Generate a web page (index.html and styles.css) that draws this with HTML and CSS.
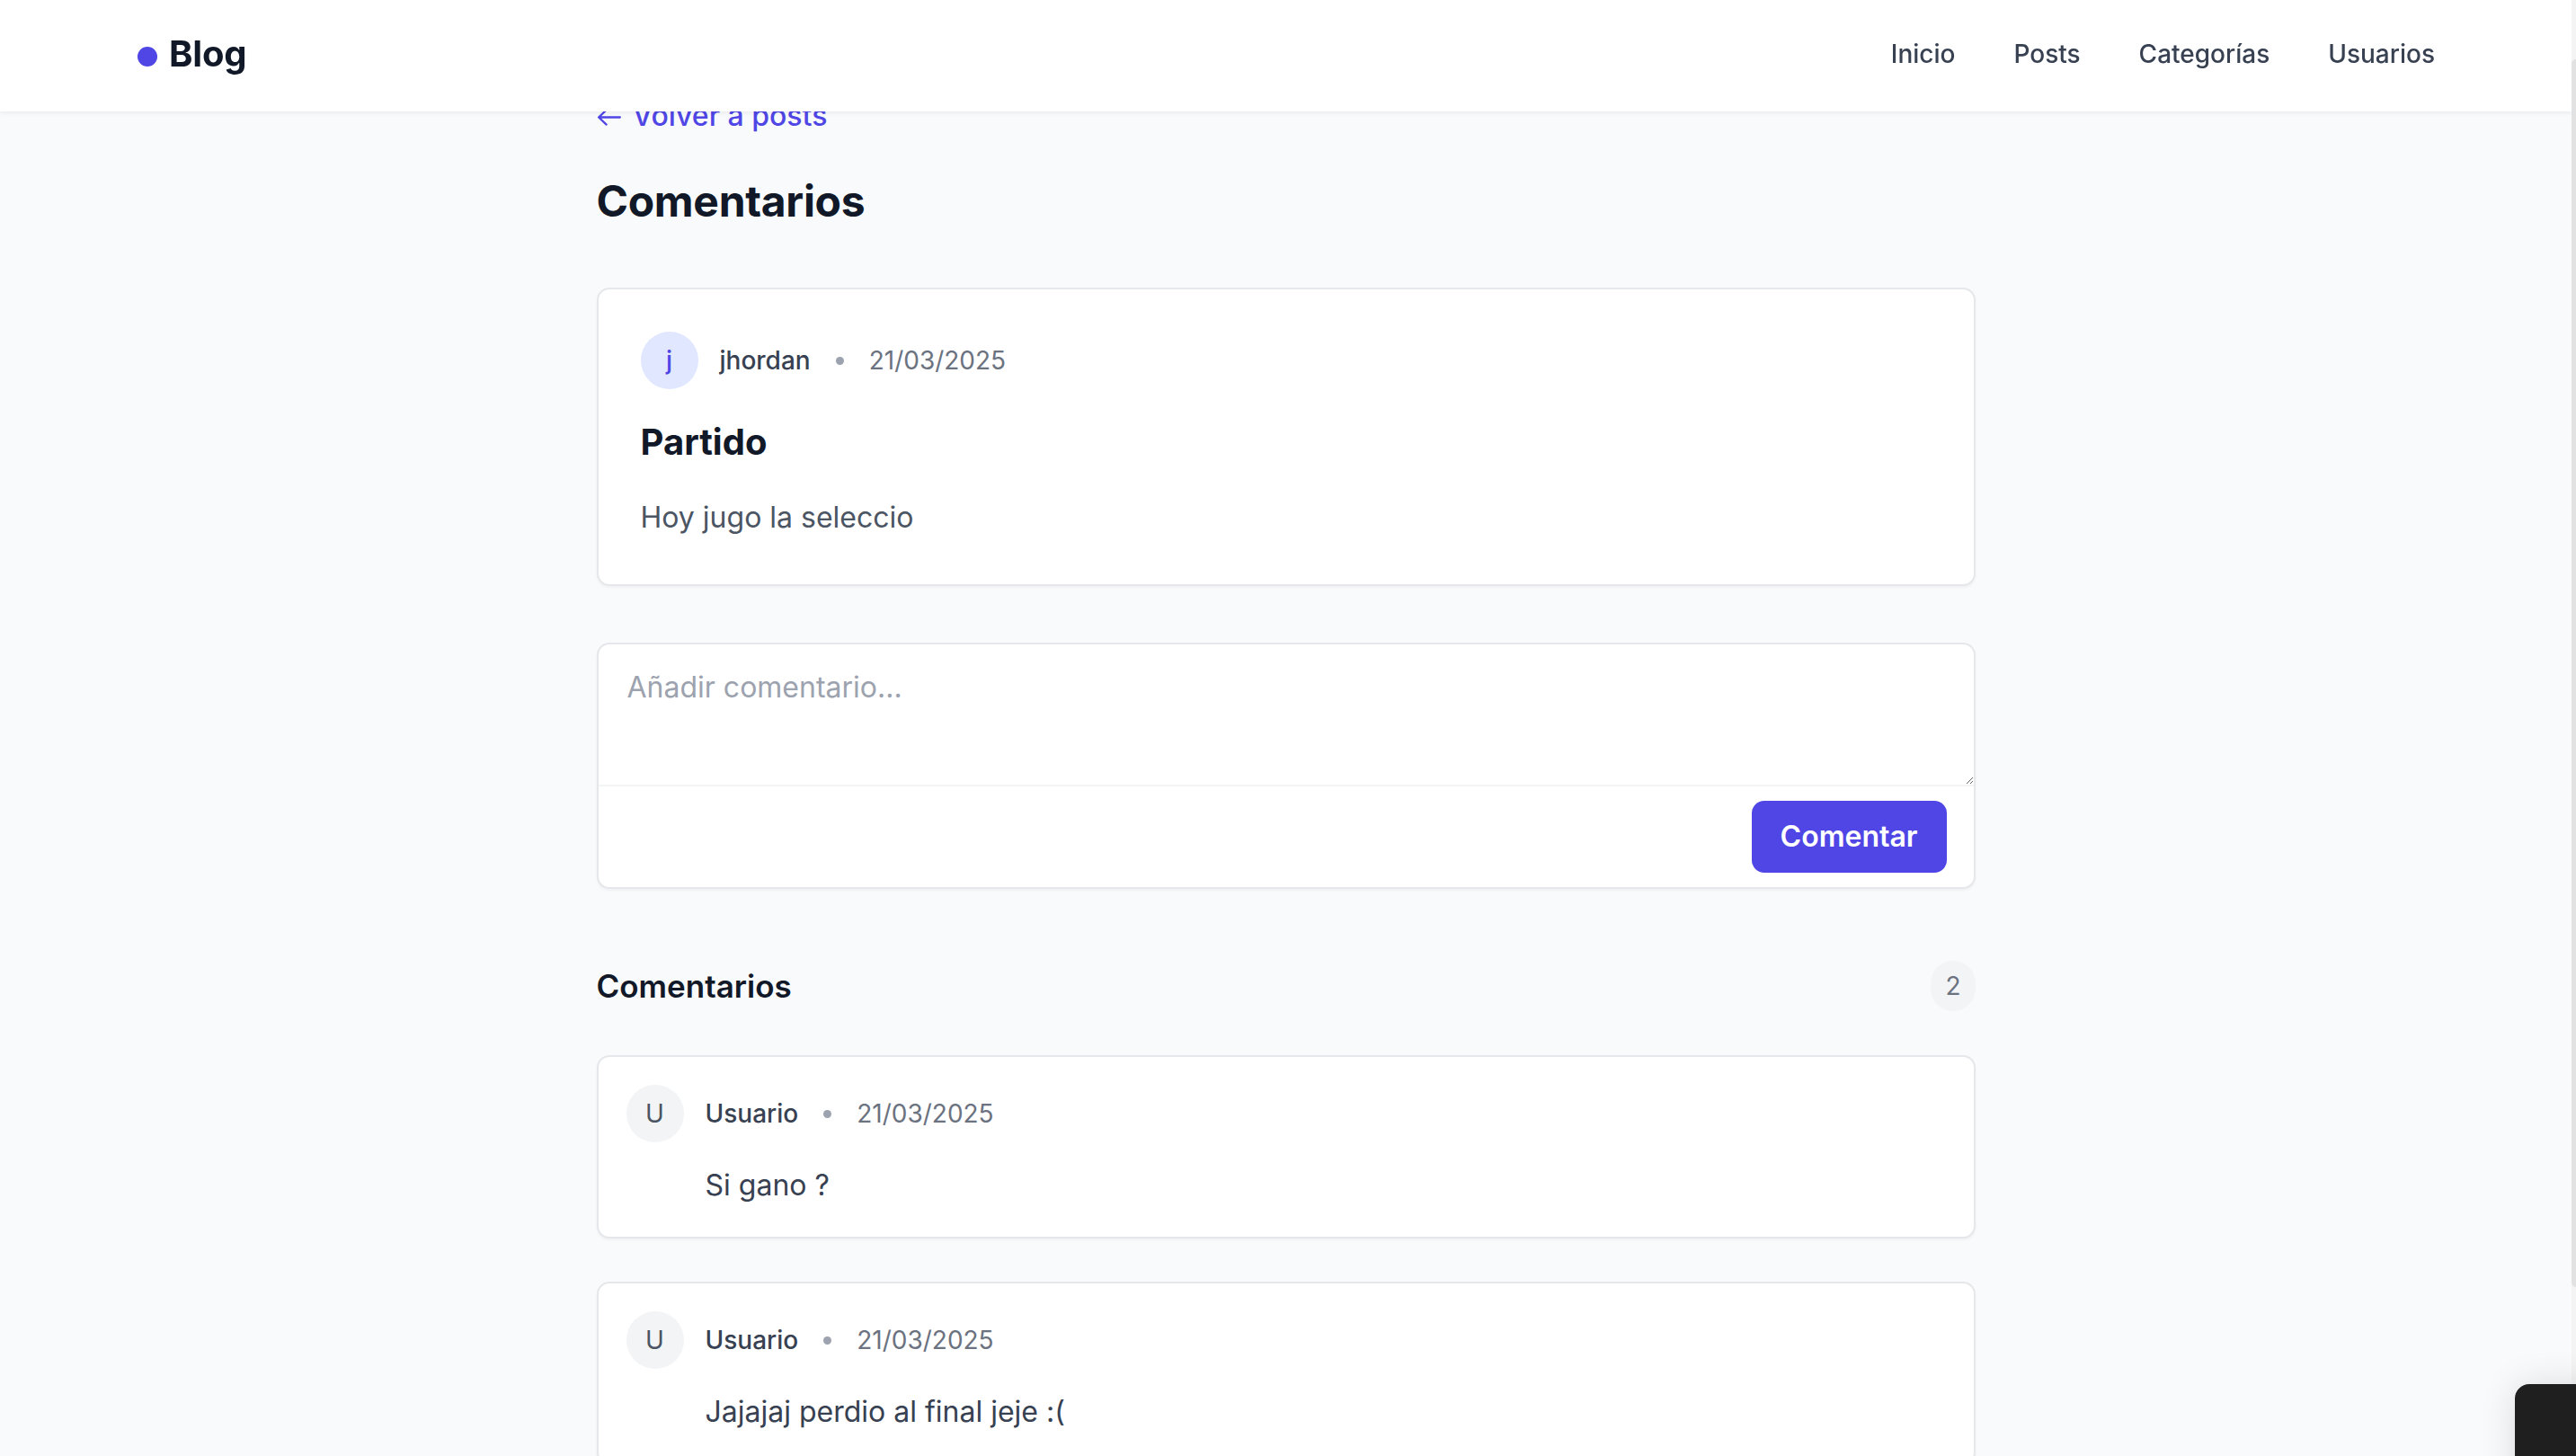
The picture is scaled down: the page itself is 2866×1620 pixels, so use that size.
FILE: index.html
```html
<!DOCTYPE html>
<html lang="es">
<head>
<meta charset="utf-8">
<title>Comentarios</title>
<link rel="stylesheet" href="styles.css">
</head>
<body>
<header class="navbar">
  <a class="brand" href="#"><span class="brand-dot"></span><span class="brand-name">Blog</span></a>
  <nav class="nav-links">
    <a href="#">Inicio</a>
    <a href="#">Posts</a>
    <a href="#">Categorías</a>
    <a href="#">Usuarios</a>
  </nav>
</header>

<main class="page">
  <a class="back-link" href="#">
    <svg class="back-icon" viewBox="0 0 28 20" width="27" height="19" aria-hidden="true"><path d="M27 10H2M11 1.5L2 10l9 8.5" fill="none" stroke="currentColor" stroke-width="2.4" stroke-linecap="round" stroke-linejoin="round"/></svg>
    <span>Volver a posts</span>
  </a>

  <h1 class="page-title">Comentarios</h1>

  <article class="card post-card">
    <div class="meta">
      <span class="avatar avatar-indigo">j</span>
      <span class="author">jhordan</span>
      <span class="sep"></span>
      <span class="date">21/03/2025</span>
    </div>
    <h2 class="post-title">Partido</h2>
    <p class="post-body">Hoy jugo la seleccio</p>
  </article>

  <form class="card comment-form">
    <textarea class="comment-input" placeholder="Añadir comentario..."></textarea>
    <div class="form-footer">
      <button type="button" class="btn">Comentar</button>
    </div>
  </form>

  <div class="section-head">
    <h3 class="section-title">Comentarios</h3>
    <span class="count">2</span>
  </div>

  <div class="comment-list">
    <div class="card comment">
      <div class="meta">
        <span class="avatar avatar-gray">U</span>
        <span class="author">Usuario</span>
        <span class="sep"></span>
        <span class="date">21/03/2025</span>
      </div>
      <p class="comment-text">Si gano ?</p>
    </div>
    <div class="card comment">
      <div class="meta">
        <span class="avatar avatar-gray">U</span>
        <span class="author">Usuario</span>
        <span class="sep"></span>
        <span class="date">21/03/2025</span>
      </div>
      <p class="comment-text">Jajajaj perdio al final jeje :(</p>
    </div>
  </div>
</main>

<div class="scrollbar"><div class="scrollbar-thumb"></div></div>
<div class="dock"></div>
</body>
</html>
```

FILE: styles.css
```css
* { box-sizing: border-box; }

html {
  overflow: hidden;
  height: 100%;
}

body {
  margin: 0 5px 0 0;
  background: #f9fafb;
  font-family: Inter, "Noto Sans", "Liberation Sans", sans-serif;
  color: #111827;
  min-height: 100%;
}

a { text-decoration: none; }

/* Top navigation */
.navbar {
  position: fixed;
  top: 0;
  left: 0;
  right: 5px;
  height: 124px;
  background: #ffffff;
  box-shadow: 0 2px 5px rgba(0, 0, 0, 0.06);
  display: flex;
  align-items: center;
  justify-content: space-between;
  padding: 0 152px 0 153px;
  z-index: 10;
}

.brand {
  display: flex;
  align-items: center;
  gap: 13px;
  color: #111827;
  margin-top: -4px;
}

.brand-dot {
  width: 22px;
  height: 22px;
  border-radius: 50%;
  background: #4f46e5;
  margin-top: 5px;
}

.brand-name {
  font-size: 40px;
  font-weight: 700;
  line-height: 56px;
  letter-spacing: -0.2px;
}

.nav-links {
  display: flex;
  gap: 65px;
  margin-top: -4px;
}

.nav-links a {
  font-size: 28px;
  font-weight: 500;
  color: #374151;
  line-height: 40px;
}

/* Page */
.page {
  width: 1534px;
  margin: 0 auto;
  padding-top: 109px;
  padding-bottom: 80px;
}

.back-link {
  display: inline-flex;
  align-items: center;
  gap: 13px;
  color: #4f46e5;
  font-size: 32px;
  font-weight: 500;
  line-height: 40px;
}

.back-icon { margin-top: 3px; }

.page-title {
  margin: 43px 0 0;
  font-size: 48px;
  line-height: 64px;
  font-weight: 700;
  color: #111827;
  letter-spacing: -0.3px;
}

.card {
  background: #ffffff;
  border: 2px solid #e5e7eb;
  border-radius: 14px;
  box-shadow: 0 2px 3px rgba(0, 0, 0, 0.04);
}

.post-card {
  margin-top: 64px;
  padding: 47px 47px 50px;
}

.meta {
  display: flex;
  align-items: center;
  height: 64px;
}

.avatar {
  width: 64px;
  height: 64px;
  border-radius: 50%;
  display: flex;
  align-items: center;
  justify-content: center;
  font-size: 28px;
  font-weight: 500;
  margin-right: 24px;
  flex-shrink: 0;
}

.avatar-indigo {
  background: #e0e7ff;
  color: #4f46e5;
}

.avatar-gray {
  background: #f3f4f6;
  color: #4b5563;
  font-weight: 400;
}

.author {
  font-size: 28px;
  font-weight: 500;
  color: #374151;
}

.sep {
  width: 9px;
  height: 9px;
  border-radius: 50%;
  background: #9ca3af;
  margin: 0 28px;
}

.date {
  font-size: 28px;
  color: #6b7280;
}

.post-title {
  margin: 31px 0 0;
  font-size: 40px;
  line-height: 56px;
  font-weight: 700;
  color: #111827;
}

.post-body {
  margin: 32px 0 0;
  font-size: 32px;
  line-height: 48px;
  color: #4b5563;
}

/* Comment form */
.comment-form {
  margin-top: 63px;
  display: flex;
  flex-direction: column;
}

.comment-input {
  display: block;
  width: 100%;
  height: 156px;
  border: none;
  outline: none;
  resize: vertical;
  background: transparent;
  padding: 24px 32px;
  font-family: Inter, "Noto Sans", "Liberation Sans", sans-serif;
  font-size: 32px;
  line-height: 48px;
  color: #111827;
  border-radius: 14px 14px 0 0;
}

.comment-input::placeholder { color: #9ca3af; }

.form-footer {
  border-top: 2px solid #f3f4f6;
  display: flex;
  justify-content: flex-end;
  padding: 16px 30px 16px;
}

.btn {
  border: none;
  background: #4f46e5;
  color: #ffffff;
  font-family: Inter, "Noto Sans", "Liberation Sans", sans-serif;
  font-size: 32px;
  font-weight: 600;
  line-height: 48px;
  padding: 16px 32px;
  border-radius: 14px;
  cursor: pointer;
}

/* Comments section */
.section-head {
  margin-top: 80px;
  display: flex;
  align-items: center;
  justify-content: space-between;
}

.section-title {
  margin: 0;
  font-size: 35px;
  line-height: 56px;
  font-weight: 600;
  color: #111827;
}

.count {
  background: #f3f4f6;
  color: #6b7280;
  font-size: 28px;
  line-height: 40px;
  padding: 8px 16px;
  border-radius: 999px;
}

.comment-list {
  margin-top: 49px;
  display: flex;
  flex-direction: column;
  gap: 48px;
}

.comment {
  padding: 31px 31px 33px;
}

.comment-text {
  margin: 24px 0 0 88px;
  font-size: 32px;
  line-height: 48px;
  color: #374151;
}

/* Window chrome overlays */
.scrollbar {
  position: fixed;
  top: 0;
  right: 0;
  width: 5px;
  height: 100%;
  background: #f4f4f4;
  z-index: 20;
}

.scrollbar-thumb {
  margin-top: 66px;
  height: 1366px;
  background: #e2e2e2;
  border-radius: 6px 0 0 6px;
}

.dock {
  position: fixed;
  left: 2798px;
  top: 1540px;
  width: 140px;
  height: 140px;
  background: #1f1f1f;
  border-radius: 16px;
  box-shadow: 0 0 40px rgba(0, 0, 0, 0.12);
  z-index: 30;
}
```
